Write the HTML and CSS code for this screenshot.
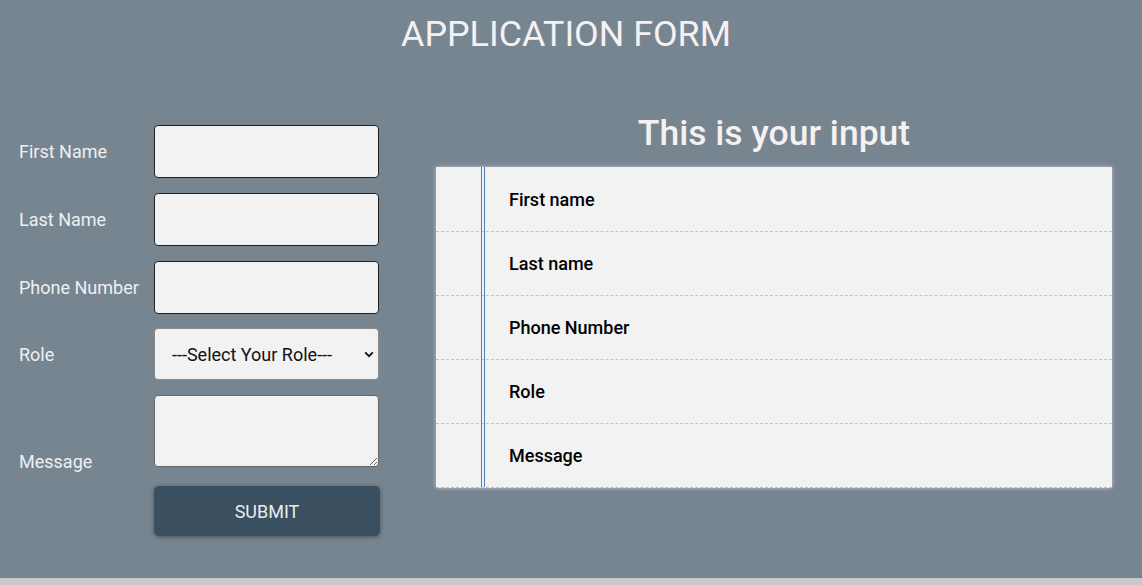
FILE: index.html
```html
<!DOCTYPE html>
<html>
<head>
<meta charset="utf-8">
<link rel="stylesheet" href="styles.css">
</head>
<body>
<div class="page">
  <h1 class="title">APPLICATION FORM</h1>
  <div class="main">
    <form class="form">
      <label class="lbl">First Name</label>
      <input class="field" type="text">
      <label class="lbl">Last Name</label>
      <input class="field" type="text">
      <label class="lbl">Phone Number</label>
      <input class="field" type="text">
      <label class="lbl">Role</label>
      <div class="select-wrap">
        <select class="select"><option>---Select Your Role---</option></select>
        <svg class="chev" width="10" height="7" viewBox="0 0 10 7"><path d="M1.2 1.4 L5 5.2 L8.8 1.4" fill="none" stroke="#111" stroke-width="1.8"/></svg>
      </div>
      <label class="lbl lbl-bottom">Message</label>
      <textarea class="area"></textarea>
      <span></span>
      <button class="submit" type="button">SUBMIT</button>
    </form>
    <section class="output">
      <h2 class="out-title">This is your input</h2>
      <div class="paper">
        <div class="row">First name</div>
        <div class="row">Last name</div>
        <div class="row">Phone Number</div>
        <div class="row">Role</div>
        <div class="row">Message</div>
      </div>
    </section>
  </div>
</div>
</body>
</html>
```
FILE: styles.css
```css
html, body {
  margin: 0;
  padding: 0;
  background: #c9c9c9;
  font-family: Roboto, "Liberation Sans", sans-serif;
}
.page {
  height: 578px;
  background: #778591;
  overflow: hidden;
}
.title {
  margin: 0;
  padding-top: 14px;
  text-align: center;
  font-size: 35.8px;
  font-weight: 400;
  line-height: 40px;
  color: #f6f1f1;
  padding-right: 10px;
}
.main {
  display: flex;
  padding-left: 19px;
  padding-top: 54px;
}
.form {
  display: grid;
  grid-template-columns: 135px 225px;
  row-gap: 15px;
  margin-top: 17px;
  align-self: flex-start;
}
.lbl {
  align-self: center;
  font-size: 18px;
  color: #eef0f2;
}
.lbl-bottom {
  align-self: end;
  margin-bottom: -5px;
}
.field {
  box-sizing: border-box;
  width: 225px;
  height: 53px;
  margin: 0;
  background: #f2f2f2;
  border: 1px solid #222;
  border-radius: 4px;
  outline: none;
}
.select-wrap {
  position: relative;
  display: flex;
  width: 225px;
  height: 52px;
  margin-top: -1px;
}
.select {
  box-sizing: border-box;
  width: 225px;
  height: 52px;
  margin: 0;
  padding: 0 0 0 17px;
  appearance: none;
  -webkit-appearance: none;
  background: #f2f2f2;
  border: 1px solid #8a8a8a;
  border-radius: 4px;
  font-family: Roboto, "Liberation Sans", sans-serif;
  font-size: 18px;
  color: #111;
}
.chev {
  position: absolute;
  right: 5px;
  top: 23px;
}
.area {
  display: block;
  box-sizing: border-box;
  width: 225px;
  height: 72px;
  margin: 0;
  background: #f2f2f2;
  border: 1px solid #666;
  border-radius: 4px;
  resize: vertical;
}
.submit {
  box-sizing: border-box;
  width: 226px;
  height: 50px;
  margin-top: 4px;
  background: #3a4f5f;
  color: #e8edf0;
  border: none;
  border-radius: 5px;
  font-family: Roboto, "Liberation Sans", sans-serif;
  font-size: 18px;
  box-shadow: 0 1px 4px rgba(40, 50, 60, 0.6);
}
.output {
  margin-left: 57px;
  width: 676px;
  padding-top: 5px;
}
.out-title {
  margin: 0;
  text-align: center;
  font-size: 35.5px;
  font-weight: 500;
  line-height: 40px;
  color: #f6f1f1;
  height: 54px;
}
.paper {
  background: #f2f2f2;
  border-bottom: 1px dashed #bbb;
  box-shadow: 0 0 4px rgba(220, 225, 230, 0.7);
  position: relative;
}
.paper::before {
  content: "";
  position: absolute;
  left: 45px;
  top: 0;
  bottom: 0;
  width: 2px;
  border-left: 1px solid #4a7fc0;
  border-right: 1px solid #4a7fc0;
}
.row {
  height: 64px;
  box-sizing: border-box;
  display: flex;
  align-items: center;
  padding-left: 73px;
  font-size: 18px;
  font-weight: 500;
  color: #000;
}
.row + .row {
  border-top: 1px dashed #c4c4c4;
}
```
